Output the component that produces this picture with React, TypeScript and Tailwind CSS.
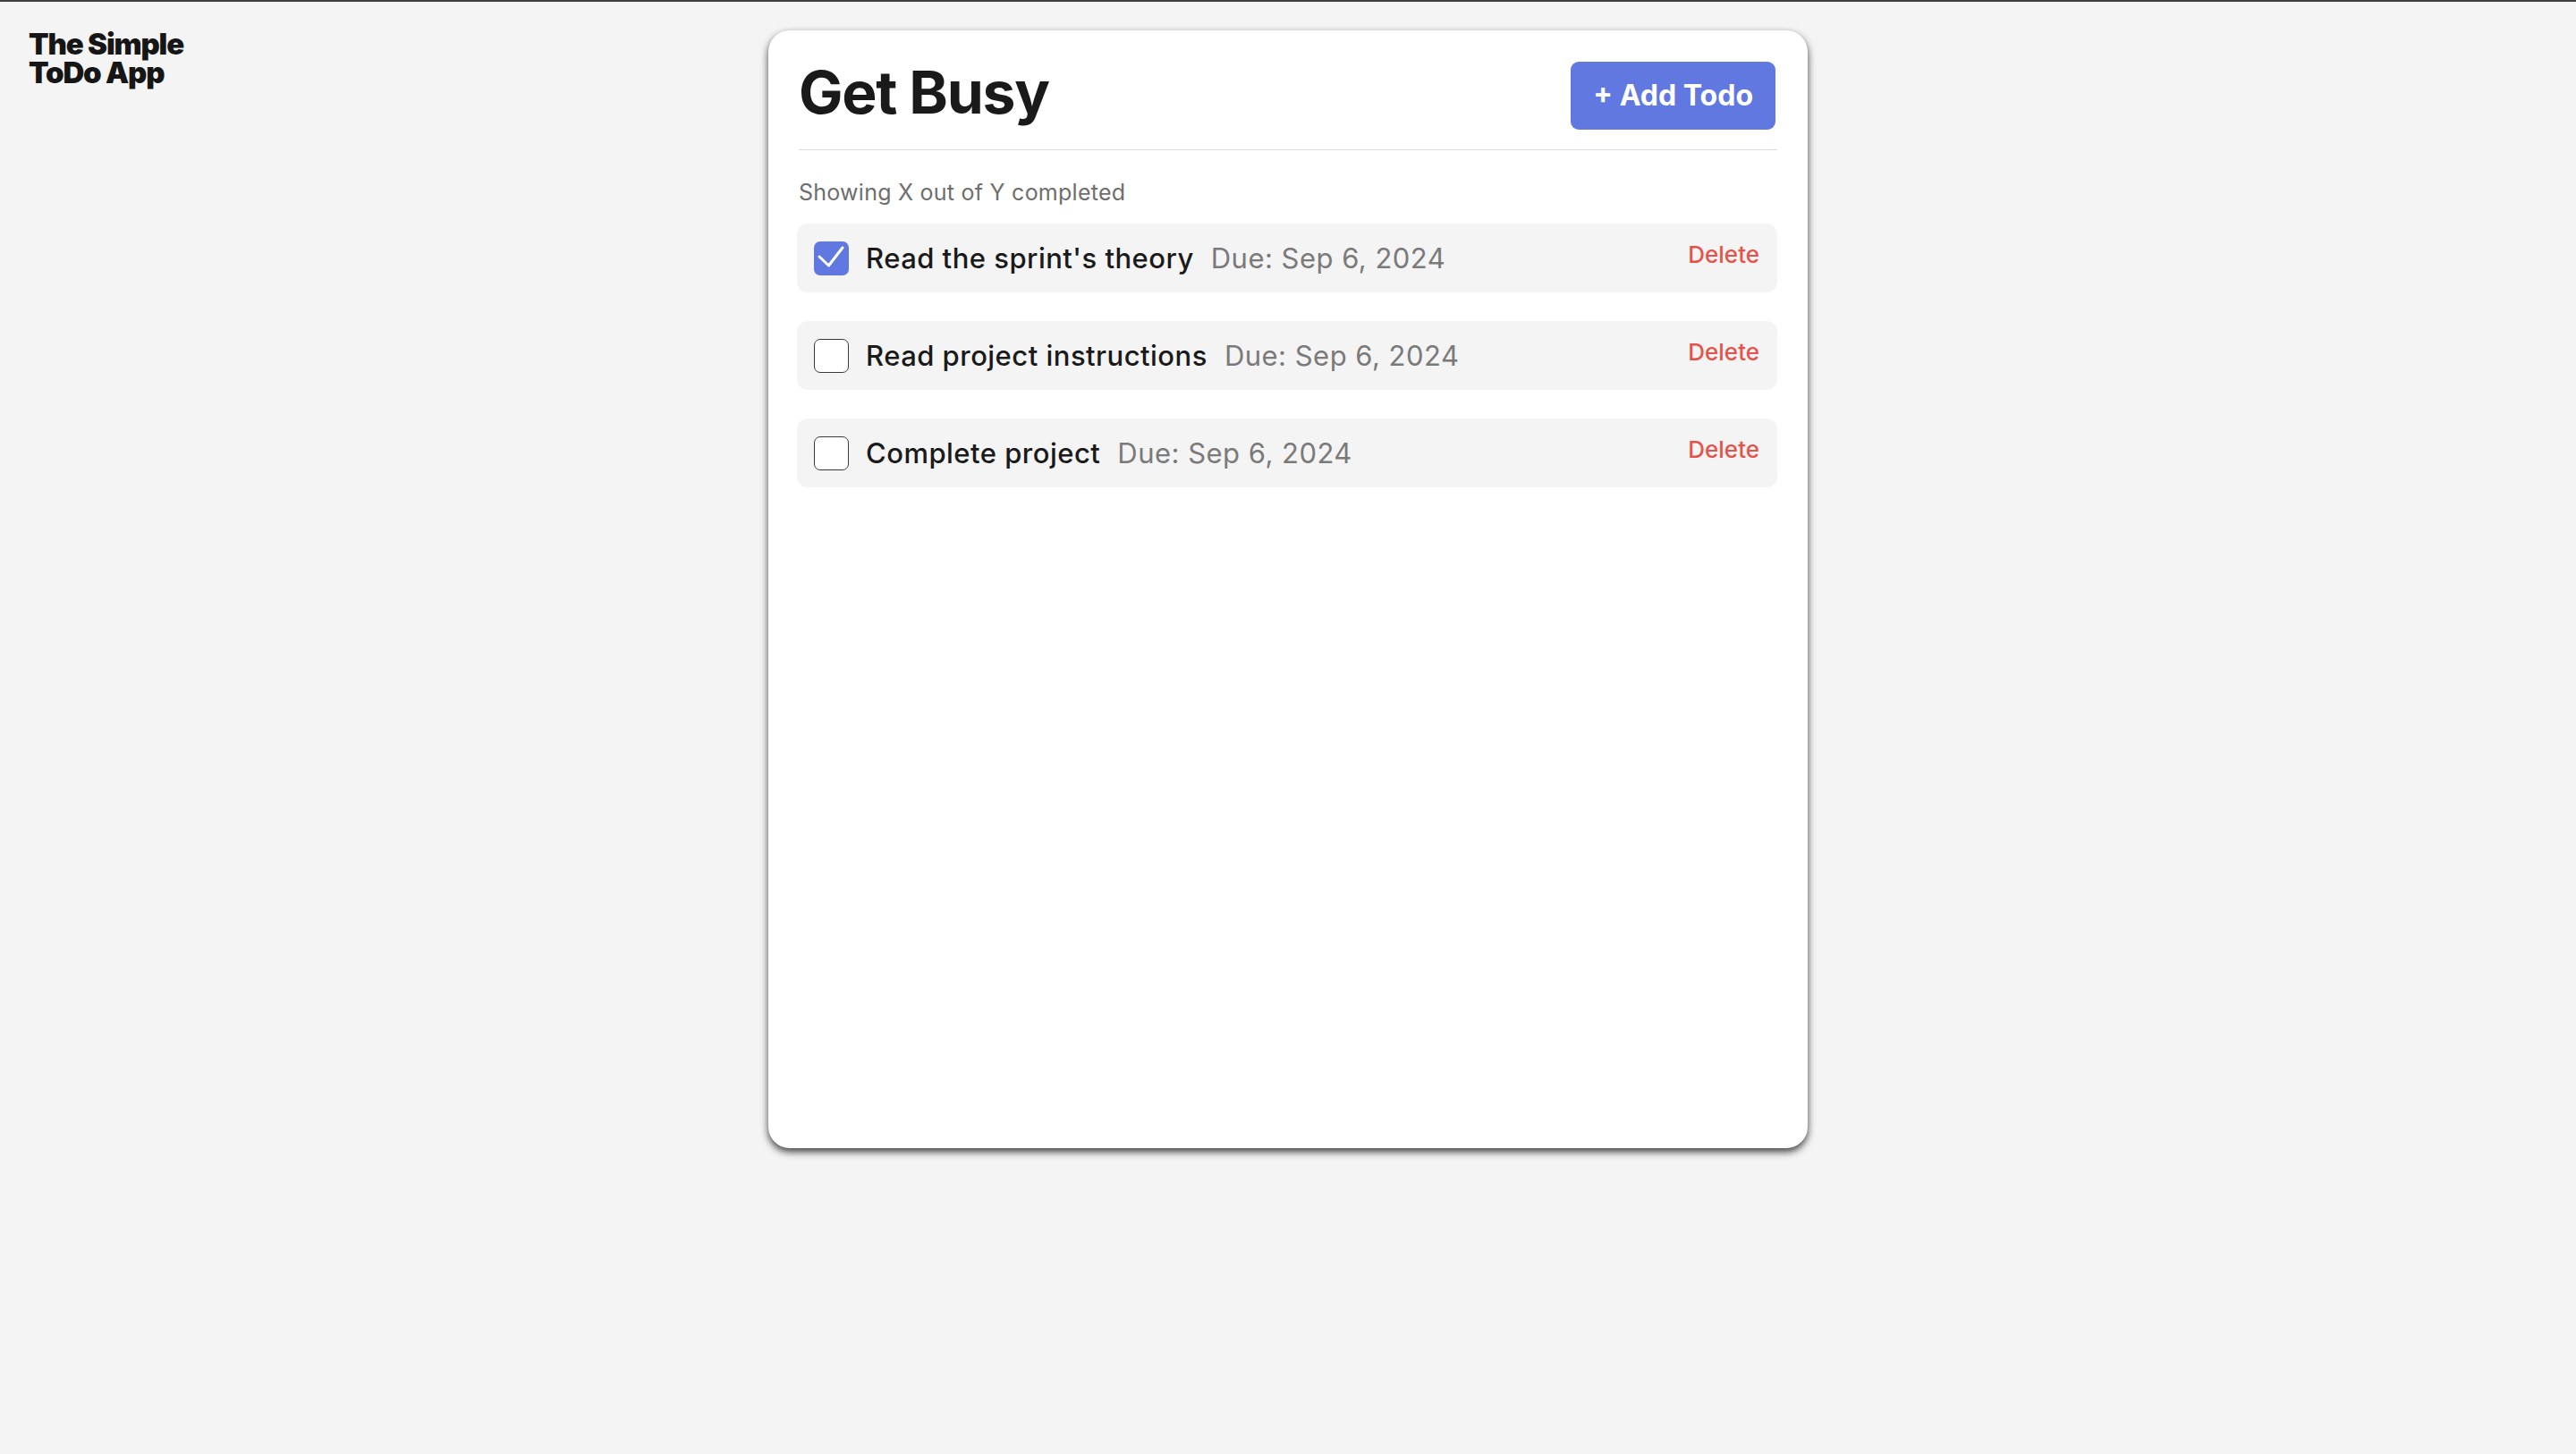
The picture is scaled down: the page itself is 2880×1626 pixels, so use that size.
import { useState } from 'react'

type Todo = {
  id: number
  title: string
  due: string
  done: boolean
}

const initialTodos: Todo[] = [
  { id: 1, title: "Read the sprint's theory", due: 'Sep 6, 2024', done: true },
  { id: 2, title: 'Read project instructions', due: 'Sep 6, 2024', done: false },
  { id: 3, title: 'Complete project', due: 'Sep 6, 2024', done: false },
]

function Checkbox({ checked, onToggle }: { checked: boolean; onToggle: () => void }) {
  return (
    <button
      type="button"
      role="checkbox"
      aria-checked={checked}
      onClick={onToggle}
      className={
        checked
          ? 'flex h-[38px] w-[39px] shrink-0 items-center justify-center rounded-[7px] bg-[#6078df]'
          : 'flex h-[38px] w-[39px] shrink-0 items-center justify-center rounded-[7px] border-[1.5px] border-[#3a3a3a] bg-white'
      }
    >
      {checked && (
        <svg width="39" height="38" viewBox="0 0 39 38" fill="none">
          <path
            d="M6 17 L16.5 27 L32 7"
            stroke="white"
            strokeWidth="3"
            strokeLinecap="round"
            strokeLinejoin="round"
          />
        </svg>
      )}
    </button>
  )
}

export default function App() {
  const [todos, setTodos] = useState(initialTodos)

  const toggle = (id: number) =>
    setTodos((current) => current.map((t) => (t.id === id ? { ...t, done: !t.done } : t)))

  const remove = (id: number) => setTodos((current) => current.filter((t) => t.id !== id))

  return (
    <div className="grid min-h-screen grid-cols-[1fr_auto_1fr] border-t-2 border-[#3f3f3f] bg-[#f4f4f4] font-['Inter',sans-serif]">
      <div className="pl-[32px] pt-[31px]">
        <h1 className="text-[33px] font-black leading-[32px] tracking-[-0.035em] text-[#161616]">
          <span className="block">The Simple</span>
          <span className="block">ToDo App</span>
        </h1>
      </div>

      <main className="mt-[32px] h-[1250px] w-[1162px] rounded-[24px] bg-white px-[34px] pt-[35px] shadow-[0_4px_8px_rgba(0,0,0,0.75)]">
        <header className="flex items-start justify-between border-b border-[#dcdcdc] pb-[22px]">
          <h2 className="mt-[1px] text-[66px] font-bold leading-[66px] tracking-[-0.02em] text-[#1a1a1a]">
            Get Busy
          </h2>
          <button
            type="button"
            className="mr-[2px] h-[76px] rounded-[9px] bg-[#6078df] px-[25px] text-[32px] font-bold text-white"
          >
            + Add Todo
          </button>
        </header>

        <p className="mt-[35px] text-[25px] leading-[25px] tracking-[0.01em] text-[#6e6e6e]">
          Showing X out of Y completed
        </p>

        <ul className="mt-[22px] flex flex-col gap-[32px]">
          {todos.map((todo) => (
            <li
              key={todo.id}
              className="-ml-[2px] flex h-[77px] items-center justify-between rounded-[12px] bg-[#f4f4f4] pl-[19px] pr-[20px]"
            >
              <div className="flex items-center gap-[19px]">
                <Checkbox checked={todo.done} onToggle={() => toggle(todo.id)} />
                <div className="flex items-center gap-[19px] tracking-[0.03em]">
                  <span className="text-[31px] font-medium leading-[31px] text-[#1a1a1a]">{todo.title}</span>
                  <span className="text-[31px] leading-[31px] text-[#7a7a7a]">Due: {todo.due}</span>
                </div>
              </div>
              <button
                type="button"
                onClick={() => remove(todo.id)}
                className="mb-[8px] text-[26px] font-medium leading-[26px] text-[#e5534b]"
              >
                Delete
              </button>
            </li>
          ))}
        </ul>
      </main>

      <div />
    </div>
  )
}
